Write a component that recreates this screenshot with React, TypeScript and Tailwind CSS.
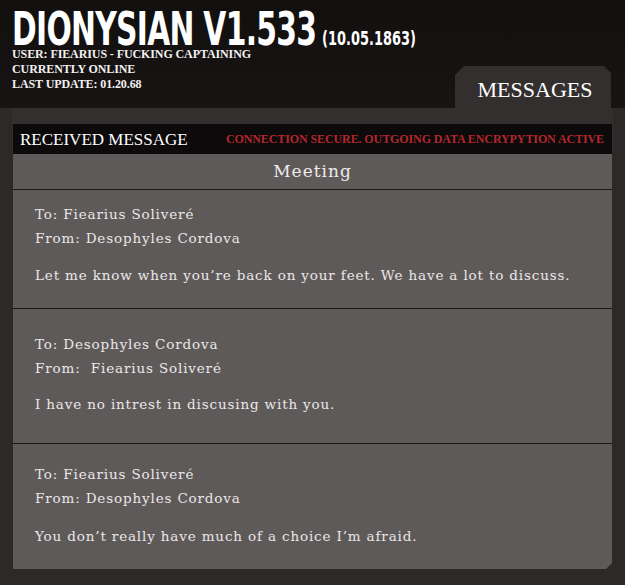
import React from "react";

const slab = { fontFamily: '"DejaVu Serif", "Liberation Serif", serif' };
const serif = { fontFamily: '"Liberation Serif", "DejaVu Serif", serif' };
const cond = { fontFamily: '"DejaVu Sans Condensed", "DejaVu Sans", sans-serif' };

type Msg = { to: string; from: string; body: string; pad: string; gap: string };

const messages: Msg[] = [
  { to: "To: Fiearius Soliveré", from: "From: Desophyles Cordova", body: "Let me know when you’re back on your feet. We have a lot to discuss.", pad: "pt-[12px] pb-[21px]", gap: "mt-[13px]" },
  { to: "To: Desophyles Cordova", from: "From:\u00a0 Fiearius Soliveré", body: "I have no intrest in discusing with you.", pad: "pt-[23px] pb-[27px]", gap: "mt-[12px]" },
  { to: "To: Fiearius Soliveré", from: "From: Desophyles Cordova", body: "You don’t really have much of a choice I’m afraid.", pad: "pt-[18px] pb-[21px]", gap: "mt-[14px]" },
];

export default function App() {
  return (
    <div className="w-[625px] h-[585px] bg-[#2d2929] flex flex-col overflow-hidden">
      <header className="h-[108px] bg-gradient-to-b from-[#120f0f] to-[#181414] flex justify-between shrink-0">
        <div className="pl-[12px] pt-[6px] text-white min-w-0 flex-1">
          <div className="flex items-end h-[42px] leading-none whitespace-nowrap origin-left [transform:scaleX(0.72)]">
            <span style={cond} className="font-bold text-[46px] tracking-[-1px] leading-[46px] mb-[-4px]">DIONYSIAN V1.533</span>
            <span style={cond} className="font-bold text-[20px] leading-[20px] ml-[8px]">(10.05.1863)</span>
          </div>
          <div style={serif} className="font-bold text-[12px] leading-[15px] tracking-[-0.1px] mt-[-1px] text-[#f2f0f0] whitespace-nowrap">
            <div>USER: FIEARIUS - FUCKING CAPTAINING</div>
            <div>CURRENTLY ONLINE</div>
            <div>LAST UPDATE: 01.20.68</div>
          </div>
        </div>
        <div className="shrink-0 self-end mr-[14px] w-[156px] h-[42px] bg-[#332f2f] [clip-path:polygon(9px_0,149px_0,156px_7px,156px_100%,0_100%,0_9px)] flex items-center justify-center pt-[6px] pl-[4px]">
          <span style={serif} className="text-white text-[22px] leading-none">MESSAGES</span>
        </div>
      </header>
      <div className="mx-[12px] bg-[#332f2f] pt-[16px] pl-[1px] pr-[1px]">
        <div className="h-[30px] bg-[#0c0a0a] flex items-center justify-between pl-[7px] pr-[8px]">
          <span style={serif} className="text-white text-[17px] tracking-[0px] leading-none">RECEIVED MESSAGE</span>
          <span style={serif} className="text-[#b3272c] font-bold text-[12px] leading-none tracking-[-0.1px]">CONNECTION SECURE. OUTGOING DATA ENCRYPYTION ACTIVE</span>
        </div>
      </div>
      <div className="mx-[13px] bg-[#5f5a5a] [clip-path:polygon(0_0,100%_0,100%_calc(100%-6px),calc(100%-6px)_100%,0_100%)]">
        <div className="h-[36px] flex items-center justify-center border-b border-[#1e1a1a]">
          <span style={slab} className="text-[#eeeaea] text-[17px] tracking-[1px] leading-none">Meeting</span>
        </div>
        {messages.map((m, i) => (
          <div key={i} className={`px-[22px] ${m.pad} ${i < messages.length - 1 ? "border-b border-[#1e1a1a]" : ""}`}>
            <div style={slab} className="text-[#ebe7e7] text-[13.5px] tracking-[0.85px] leading-[24px] whitespace-nowrap">
              <div>{m.to}</div>
              <div>{m.from}</div>
              <div className={m.gap}>{m.body}</div>
            </div>
          </div>
        ))}
      </div>
    </div>
  );
}
